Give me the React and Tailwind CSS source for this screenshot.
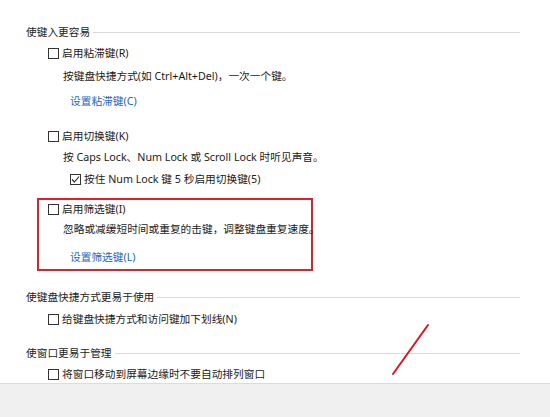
function Box({ checked }) {
  return (
    <span className="w-[11px] h-[11px] border border-[#333] bg-white flex items-center justify-center shrink-0">
      {checked && (
        <svg width="9" height="9" viewBox="0 0 9 9">
          <path d="M1 4.5 L3.5 7 L8 1.5" fill="none" stroke="#222" strokeWidth="1.1" />
        </svg>
      )}
    </span>
  );
}

function Heading({ children, className = '' }) {
  return (
    <div className={`h-4 flex items-center ml-[26px] mr-[30px] ${className}`}>
      <span className="text-[#222]">{children}</span>
      <span className="flex-1 h-px bg-[#d9d9d9] ml-[3px]" />
    </div>
  );
}

function Check({ label, checked, className = '' }) {
  return (
    <div className={`h-4 flex items-center gap-[3px] ${className}`}>
      <Box checked={checked} />
      <span>{label}</span>
    </div>
  );
}

export default function App() {
  return (
    <div className="relative w-[550px] h-[417px] bg-white overflow-hidden flex flex-col text-[10.7px] leading-none whitespace-nowrap text-[#1a1a1a] font-['Noto_Sans','Noto_Sans_CJK_SC',sans-serif]">
      <div className="flex-1 flex flex-col pt-[24px]">
        <Heading>使键入更容易</Heading>
        <Check className="ml-[48px] mt-[5px]" label="启用粘滞键(R)" />
        <div className="h-4 flex items-center ml-[63px] mt-[7px]">按键盘快捷方式(如 Ctrl+Alt+Del)，一次一个键。</div>
        <div className="h-4 flex items-center ml-[70px] mt-[9px] text-[#1667c7]">设置粘滞键(C)</div>
        <Check className="ml-[48px] mt-[19px]" label="启用切换键(K)" />
        <div className="h-4 flex items-center ml-[63px] mt-[5px]">按 Caps Lock、Num Lock 或 Scroll Lock 时听见声音。</div>
        <Check className="ml-[70px] mt-[6px]" label="按住 Num Lock 键 5 秒启用切换键(5)" checked />

        <div className="ml-[37px] w-[276px] mt-[11px] border-2 border-[#e0212b] pt-px pb-[4px] flex flex-col">
          <Check className="ml-[9px]" label="启用筛选键(I)" />
          <div className="h-4 flex items-center ml-[24px] mt-[4px]">忽略或减缓短时间或重复的击键，调整键盘重复速度。</div>
          <div className="h-4 flex items-center ml-[31px] mt-[12px] text-[#1667c7]">设置筛选键(L)</div>
        </div>

        <Heading className="mt-[18px]">使键盘快捷方式更易于使用</Heading>
        <Check className="ml-[48px] mt-[6px]" label="给键盘快捷方式和访问键加下划线(N)" />
        <Heading className="mt-[18px]">使窗口更易于管理</Heading>
        <Check className="ml-[48px] mt-[5px]" label="将窗口移动到屏幕边缘时不要自动排列窗口" />
      </div>
      <div className="h-[34px] shrink-0 bg-[#f0f0f0] border-t border-[#dcdcdc]" />

      <svg className="absolute left-0 top-0 pointer-events-none" width="550" height="417">
        <line x1="428" y1="325" x2="393" y2="374" stroke="#e5131d" strokeWidth="2" strokeLinecap="round" />
      </svg>
    </div>
  );
}
